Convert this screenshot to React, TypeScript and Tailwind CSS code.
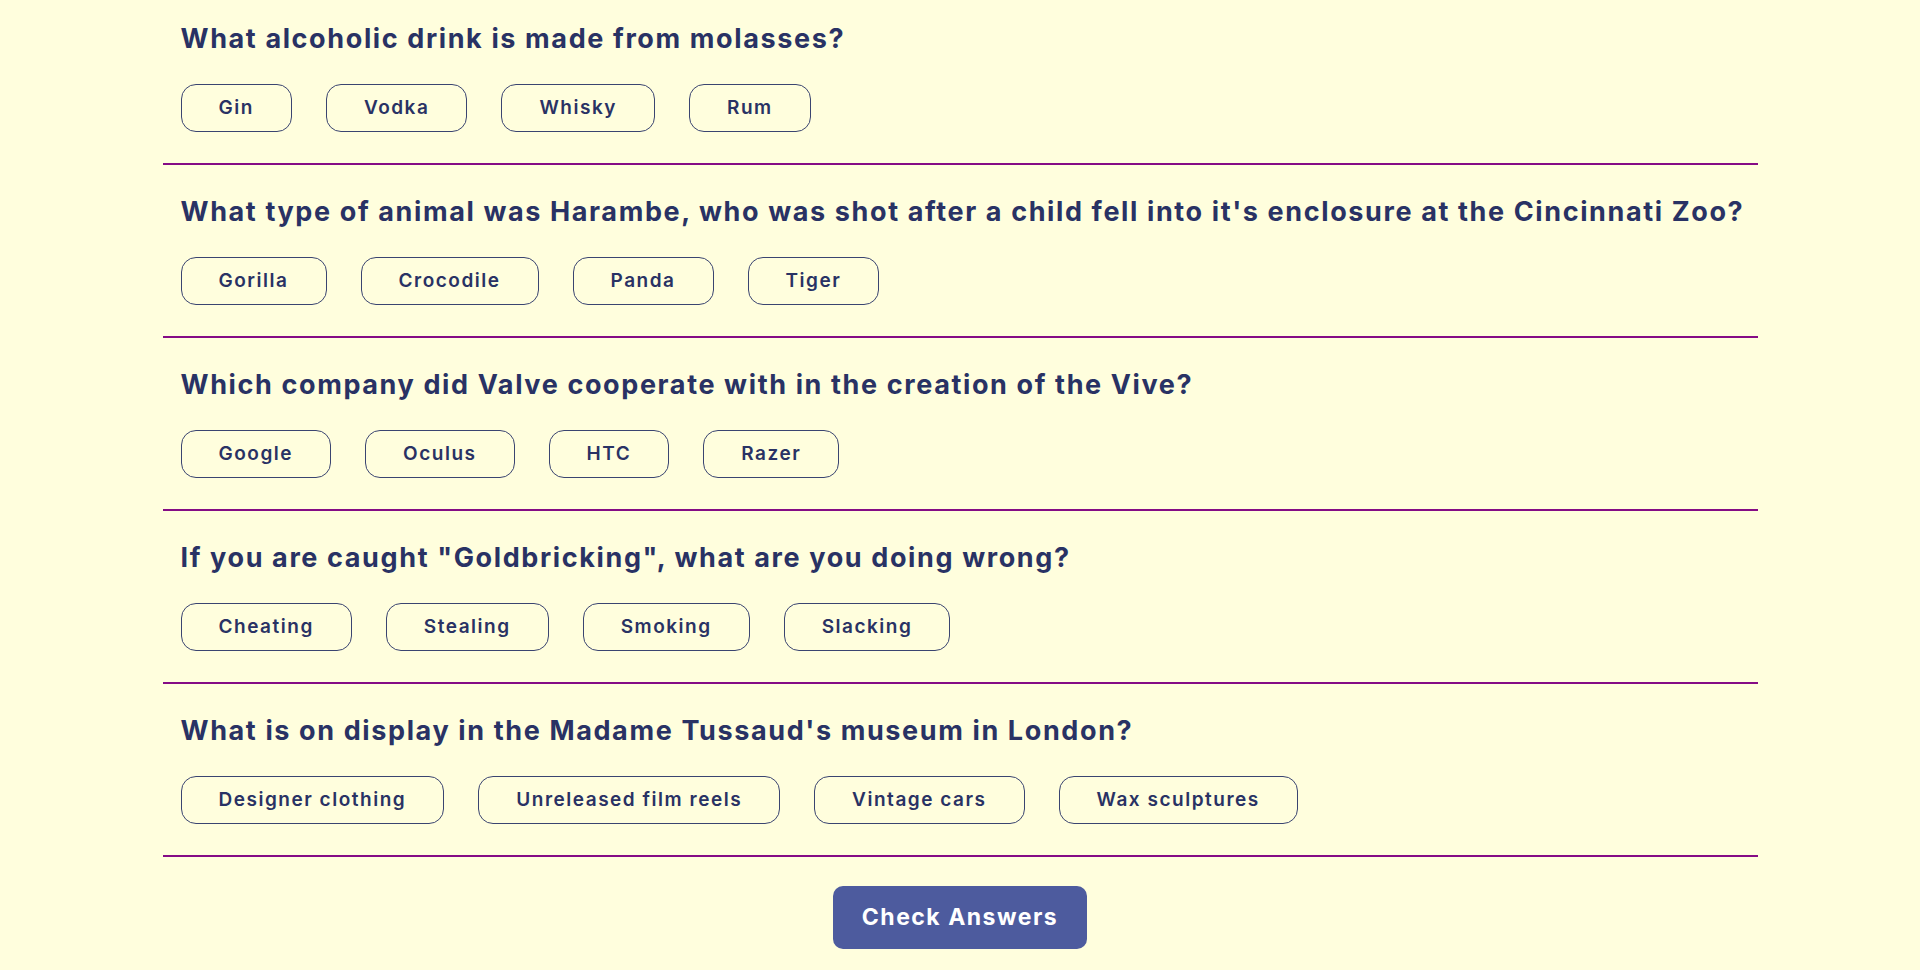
import React from "react";

const questions: { q: string; a: string[] }[] = [
  { q: "What alcoholic drink is made from molasses?", a: ["Gin", "Vodka", "Whisky", "Rum"] },
  {
    q: "What type of animal was Harambe, who was shot after a child fell into it's enclosure at the Cincinnati Zoo?",
    a: ["Gorilla", "Crocodile", "Panda", "Tiger"],
  },
  { q: "Which company did Valve cooperate with in the creation of the Vive?", a: ["Google", "Oculus", "HTC", "Razer"] },
  { q: 'If you are caught "Goldbricking", what are you doing wrong?', a: ["Cheating", "Stealing", "Smoking", "Slacking"] },
  {
    q: "What is on display in the Madame Tussaud's museum in London?",
    a: ["Designer clothing", "Unreleased film reels", "Vintage cars", "Wax sculptures"],
  },
];

export default function App() {
  return (
    <div className="min-h-screen w-full bg-[#FFFEDD] overflow-hidden">
      <div className="mx-auto w-[1595px]">
        {questions.map((item, i) => (
          <div
            key={i}
            className={
              (i === 0 ? "pt-[23px] " : "pt-[31px] ") +
              "px-[18px] pb-[31px] border-b-2 border-[#850c85]"
            }
          >
            <h2 className="text-[27px] leading-[32px] font-bold text-[#293264] [font-family:Inter,sans-serif] tracking-[0.06em] whitespace-nowrap">
              {item.q}
            </h2>
            <div className="mt-[29px] flex gap-[34px]">
              {item.a.map((ans) => (
                <button
                  key={ans}
                  className="h-[48px] px-[37px] rounded-[15px] border border-[#3a4470] text-[19px] font-semibold text-[#293264] [font-family:Inter,sans-serif] tracking-[0.08em]"
                >
                  {ans}
                </button>
              ))}
            </div>
          </div>
        ))}
        <div className="flex justify-center mt-[29px]">
          <button className="h-[63px] w-[254px] rounded-[10px] bg-[#4D5B9E] text-white text-[23px] font-bold [font-family:Inter,sans-serif] tracking-[0.065em]">
            Check Answers
          </button>
        </div>
      </div>
    </div>
  );
}
